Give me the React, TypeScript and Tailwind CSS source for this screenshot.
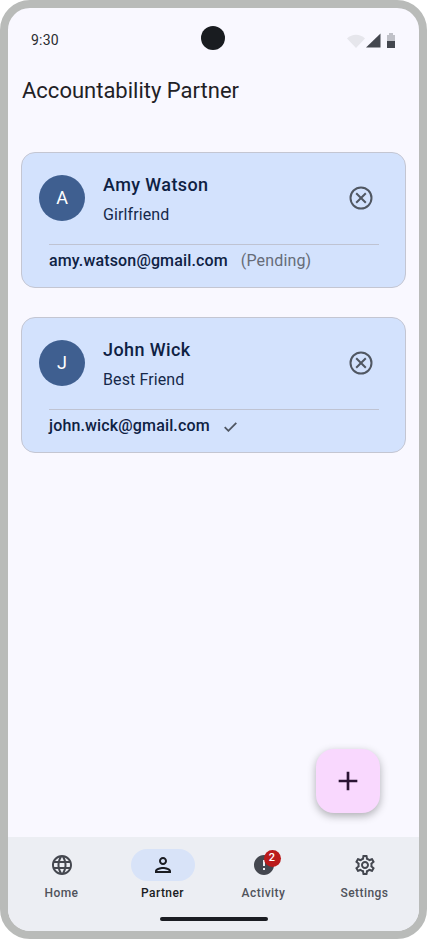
import { MdAdd, MdError, MdLanguage, MdOutlinePerson, MdOutlineSettings } from "react-icons/md";

const StatusIcons = () => (
    <div className="flex items-end justify-end gap-[1px]">
        <svg width="18" height="15" viewBox="0 0 18 15">
            <path d="M0 5.5 C5 0.5 13 0.5 18 5.5 L9 15 Z" fill="#e6e6ec" />
        </svg>
        <svg width="15" height="15" viewBox="0 0 15 15" className="mr-[5px]">
            <path d="M0 14.5 L14.5 0.5 V14.5 Z" fill="#44474f" />
        </svg>
        <div className="flex h-[15px] w-[8px] flex-col items-center">
            <div className="h-[2px] w-[4px] bg-[#c0c1c8]" />
            <div className="h-[6px] w-[8px] bg-[#c0c1c8]" />
            <div className="h-[7px] w-[8px] bg-[#44474f]" />
        </div>
    </div>
);

const RemoveIcon = () => (
    <svg width="24" height="24" viewBox="0 0 24 24" fill="none" stroke="#505762" strokeWidth="2" className="shrink-0">
        <circle cx="12" cy="12" r="10.5" />
        <path d="M7.2 7.2 L16.8 16.8 M16.8 7.2 L7.2 16.8" />
    </svg>
);

const CheckIcon = () => (
    <svg width="13" height="10" viewBox="0 0 13 10" fill="none" stroke="#4f5662" strokeWidth="1.8" className="ml-[14px] mt-[2px] shrink-0">
        <path d="M0.7 5.2 L4.4 8.8 L12.3 0.8" />
    </svg>
);

interface PartnerCardProps {
    initial: string;
    name: string;
    relation: string;
    email: string;
    pending?: boolean;
}

const PartnerCard = ({ initial, name, relation, email, pending }: PartnerCardProps) => (
    <div className="h-[136px] rounded-[14px] border border-[#c4c6d2] bg-[#d3e2fd] pl-[17px] pr-[21px] pt-[16px]">
        <div className="flex h-[57px] items-center">
            <div className="flex h-[46px] w-[46px] shrink-0 items-center justify-center rounded-full bg-[#3f5f90] text-[18px] text-white">
                {initial}
            </div>
            <div className="ml-[18px] flex-1 pt-[2px]">
                <div className="text-[18px] leading-[24px] tracking-[0.4px] font-medium text-[#0e2143]">{name}</div>
                <div className="mt-[8px] text-[16px] leading-[20px] tracking-[0.1px] text-[#16294a]">{relation}</div>
            </div>
            <div className="mr-[11px]">
                <RemoveIcon />
            </div>
        </div>
        <div className="ml-[10px] mr-[5px] mt-[18px] border-t border-[#bfc3d2]" />
        <div className="ml-[10px] mt-[6px] flex items-center text-[16px] leading-[20px]">
            <span className="font-medium tracking-[0.15px] text-[#0e2143]">{email}</span>
            {pending ? (
                <span className="ml-[13px] tracking-[0.15px] text-[#666c78]">(Pending)</span>
            ) : (
                <CheckIcon />
            )}
        </div>
    </div>
);

const NavItem = ({ label, active, children }: { label: string; active?: boolean; children: React.ReactNode }) => (
    <div className="flex w-[101px] flex-col items-center">
        <div className={`flex h-[32px] w-[64px] items-center justify-center rounded-full ${active ? "bg-[#d8e3f8]" : ""}`}>
            {children}
        </div>
        <div className={`mt-[4px] text-[12px] leading-[16px] tracking-[0.45px] font-medium ${active ? "text-[#1a1c22]" : "text-[#50535b]"}`}>
            {label}
        </div>
    </div>
);

export default function App() {
    return (
        <div className="h-[939px] w-[427px] bg-white font-['Roboto',sans-serif]">
            <div className="flex h-full flex-col overflow-hidden rounded-[30px] border-[8px] border-[#b9bbb9] bg-[#f9f8ff]">
                <div className="flex h-[60px] shrink-0 items-start pl-[23px] pr-[24px] pt-[22px]">
                    <span className="flex-1 text-[14px] leading-[20px] tracking-[0.2px] text-[#2a2c30]">9:30</span>
                    <div className="mt-[-4px] h-[24px] w-[24px] rounded-full bg-[#191c20]" />
                    <div className="mt-[3px] flex-1">
                        <StatusIcons />
                    </div>
                </div>
                <h1 className="ml-[14px] mt-[9px] text-[22px] leading-[28px] font-normal text-[#1f2126]">Accountability Partner</h1>
                <div className="mt-[47px] flex flex-col gap-[29px] px-[13px]">
                    <PartnerCard initial="A" name="Amy Watson" relation="Girlfriend" email="amy.watson@gmail.com" pending />
                    <PartnerCard initial="J" name="John Wick" relation="Best Friend" email="john.wick@gmail.com" />
                </div>
                <div className="flex flex-1 items-end justify-end pb-[24px] pr-[39px]">
                    <div className="flex h-[64px] w-[64px] items-center justify-center rounded-[18px] bg-[#f9d8fe] shadow-[0_3px_8px_rgba(0,0,0,0.3)]">
                        <MdAdd className="text-[#2a1433]" size={32} />
                    </div>
                </div>
                <div className="flex h-[94px] shrink-0 flex-col bg-[#eceef3] pt-[12px]">
                    <div className="flex pl-[3px]">
                        <NavItem label="Home">
                            <MdLanguage className="text-[#44474f]" size={24} />
                        </NavItem>
                        <NavItem label="Partner" active>
                            <MdOutlinePerson className="text-[#1a1c22]" size={24} />
                        </NavItem>
                        <NavItem label="Activity">
                            <div className="relative">
                                <MdError className="text-[#44474f]" size={24} />
                                <span className="absolute left-[12px] top-[-3px] flex h-[17px] w-[17px] items-center justify-center rounded-full bg-[#ba1a1a] text-[11px] font-medium text-white">
                                    2
                                </span>
                            </div>
                        </NavItem>
                        <NavItem label="Settings">
                            <MdOutlineSettings className="text-[#44474f]" size={24} />
                        </NavItem>
                    </div>
                    <div className="mx-auto mt-[16px] h-[4px] w-[108px] rounded-full bg-[#1a1c22]" />
                </div>
            </div>
        </div>
    );
}
